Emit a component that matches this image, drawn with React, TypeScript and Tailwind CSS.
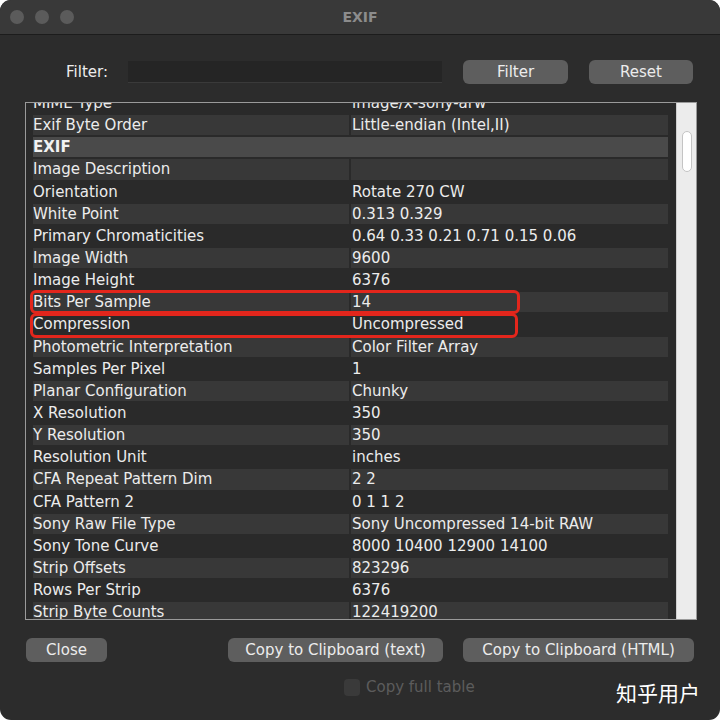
import React from "react";

type Kind = "light" | "dark" | "header";

const ROWS: [string, string, Kind][] = [
  ["MIME Type", "image/x-sony-arw", "dark"],
  ["Exif Byte Order", "Little-endian (Intel,II)", "light"],
  ["EXIF", "", "header"],
  ["Image Description", "", "light"],
  ["Orientation", "Rotate 270 CW", "dark"],
  ["White Point", "0.313 0.329", "light"],
  ["Primary Chromaticities", "0.64 0.33 0.21 0.71 0.15 0.06", "dark"],
  ["Image Width", "9600", "light"],
  ["Image Height", "6376", "dark"],
  ["Bits Per Sample", "14", "light"],
  ["Compression", "Uncompressed", "dark"],
  ["Photometric Interpretation", "Color Filter Array", "light"],
  ["Samples Per Pixel", "1", "dark"],
  ["Planar Configuration", "Chunky", "light"],
  ["X Resolution", "350", "dark"],
  ["Y Resolution", "350", "light"],
  ["Resolution Unit", "inches", "dark"],
  ["CFA Repeat Pattern Dim", "2 2", "light"],
  ["CFA Pattern 2", "0 1 1 2", "dark"],
  ["Sony Raw File Type", "Sony Uncompressed 14-bit RAW", "light"],
  ["Sony Tone Curve", "8000 10400 12900 14100", "dark"],
  ["Strip Offsets", "823296", "light"],
  ["Rows Per Strip", "6376", "dark"],
  ["Strip Byte Counts", "122419200", "light"],
];

function Row({ name, value, kind }: { name: string; value: string; kind: Kind }) {
  if (kind === "header") {
    return (
      <div className="h-[22.15px] pl-[7px] pr-[8px] py-px">
        <div className="h-full bg-[#4a4a4a] font-bold leading-[20px] text-[#f2f2f2]">{name}</div>
      </div>
    );
  }
  const cell = kind === "light" ? "bg-[#383838]" : "bg-transparent";
  return (
    <div className="h-[22.15px] pl-[7px] pr-[8px] py-px flex gap-[2px]">
      <div className={`w-[316px] h-full ${cell} leading-[20px] whitespace-nowrap`}>{name}</div>
      <div className={`flex-1 h-full ${cell} leading-[20px] pl-px whitespace-nowrap`}>{value}</div>
    </div>
  );
}

export default function App() {
  return (
    <div className="w-[720px] h-[720px] bg-white" style={{ fontFamily: '"DejaVu Sans", sans-serif' }}>
      <div className="h-full rounded-[11px] bg-[#2c2c2c] flex flex-col overflow-hidden text-[15px] text-[#ececec]">
        {/* Title bar */}
        <div className="h-[35px] shrink-0 bg-[#393939] border-b border-[#1c1c1c] flex items-center px-[10px]">
          <div className="flex gap-[11px]">
            <span className="w-[14px] h-[14px] rounded-full bg-[#5b5b5b]" />
            <span className="w-[14px] h-[14px] rounded-full bg-[#5b5b5b]" />
            <span className="w-[14px] h-[14px] rounded-full bg-[#5b5b5b]" />
          </div>
          <div className="flex-1 text-center text-[14px] font-bold text-[#8c8c8c] -ml-[64px]">EXIF</div>
        </div>

        {/* Filter row */}
        <div className="flex items-center mt-[25px] h-[24px]">
          <span className="w-[108px] text-right text-[#ececec]">Filter:</span>
          <div className="ml-[20px] w-[314px] h-[22px] bg-[#252525] border-b border-[#3a3a3a]" />
          <button className="ml-[21px] w-[105px] h-[24px] rounded-[6px] bg-[#5e5e5e] text-[#ececec]">Filter</button>
          <button className="ml-[21px] w-[104px] h-[24px] rounded-[6px] bg-[#5e5e5e] text-[#ececec]">Reset</button>
        </div>

        {/* Table */}
        <div className="mt-[18px] ml-[25px] w-[672px] h-[518px] border border-[#9a9a9a] flex relative bg-[#2a2a2a]">
          <div className="flex-1 overflow-hidden">
            <div className="-mt-[11px]">
              {ROWS.map(([n, v, k]) => (
                <Row key={n} name={n} value={v} kind={k} />
              ))}
            </div>
          </div>
          <div className="w-[20px] bg-[#ececec] border-l border-[#cfcfcf] flex justify-center pt-[28px]">
            <div className="w-[10px] h-[41px] rounded-full bg-white border border-[#c4c4c4]" />
          </div>
          {/* annotations */}
          <div className="absolute left-[4px] top-[187px] w-[490px] h-[24px] border-[3px] border-[#e3261c] rounded-[6px]" />
          <div className="absolute left-[4px] top-[210px] w-[488px] h-[25px] border-[3px] border-[#e3261c] rounded-[6px]" />
        </div>

        {/* Buttons */}
        <div className="flex items-center mt-[18px] h-[24px]">
          <button className="ml-[26px] w-[81px] h-[24px] rounded-[6px] bg-[#5e5e5e] text-[#ececec]">Close</button>
          <button className="ml-[121px] w-[215px] h-[24px] rounded-[6px] bg-[#5e5e5e] text-[#ececec]">Copy to Clipboard (text)</button>
          <button className="ml-[20px] w-[231px] h-[24px] rounded-[6px] bg-[#5e5e5e] text-[#ececec]">Copy to Clipboard (HTML)</button>
        </div>

        {/* Bottom */}
        <div className="flex items-center mt-[16px] h-[18px]">
          <span className="ml-[344px] w-[16px] h-[17px] rounded-[4px] bg-[#3a3a3a]" />
          <span className="ml-[6px] text-[#5c5c5c]">Copy full table</span>
          <span
            className="ml-auto mr-[20px] translate-y-[5px] text-[21px] leading-none text-white"
            style={{ fontFamily: '"Noto Sans CJK SC", sans-serif' }}
          >
            知乎用户
          </span>
        </div>
      </div>
    </div>
  );
}
